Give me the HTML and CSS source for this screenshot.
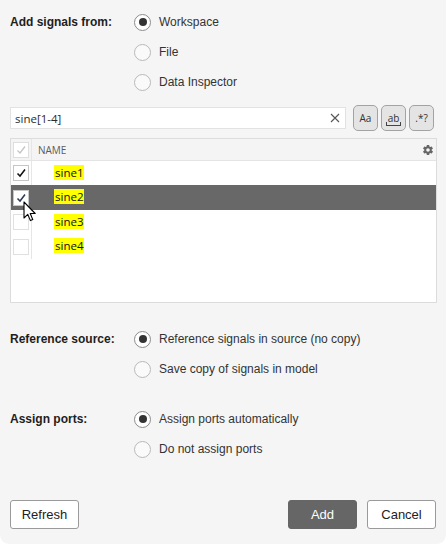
FILE: index.html
```html
<!DOCTYPE html>
<html lang="en">
<head>
<meta charset="utf-8">
<title>Add signals</title>
<link rel="stylesheet" href="styles.css">
</head>
<body>
<div class="dialog">
  <div class="field">
    <div class="field-label">Add signals from:</div>
    <div class="radio-group">
      <div class="radio checked"><span class="radio-circle"></span><span>Workspace</span></div>
      <div class="radio"><span class="radio-circle"></span><span>File</span></div>
      <div class="radio"><span class="radio-circle"></span><span>Data Inspector</span></div>
    </div>
  </div>

  <div class="search-row">
    <div class="search-box">
      <span class="search-text">sine[1-4]</span>
      <svg class="clear-icon" width="10" height="10" viewBox="0 0 10 10"><path d="M1 1 L9 9 M9 1 L1 9" stroke="#555" stroke-width="1.1" fill="none"/></svg>
    </div>
    <div class="toggle-buttons">
      <div class="toggle">Aa</div>
      <div class="toggle"><span class="word">ab</span></div>
      <div class="toggle">.*?</div>
    </div>
  </div>

  <div class="table">
    <div class="thead">
      <div class="cell-check"><span class="checkbox disabled"><svg width="12" height="12" viewBox="0 0 12 12"><path d="M2.5 6.5 L5 9 L10 2.5" stroke="#c4c4c4" stroke-width="1.3" fill="none"/></svg></span></div>
      <div class="cell-name head-name">NAME</div>
      <svg class="gear" width="12" height="12" viewBox="0 0 24 24"><path fill="#666" d="M19.4 13c.04-.33.06-.66.06-1s-.02-.67-.06-1l2.1-1.650c.2-.15.25-.42.12-.64l-2-3.46c-.12-.22-.39-.3-.61-.22l-2.49 1c-.52-.4-1.080-.73-1.690-.98l-.38-2.65A.49.49 0 0 0 14 2h-4c-.25 0-.46.18-.49.42l-.38 2.65c-.61.25-1.17.59-1.69.98l-2.49-1c-.23-.09-.49 0-.61.22l-2 3.46c-.13.22-.07.49.12.64L4.57 11c-.04.33-.07.67-.07 1s.03.67.07 1l-2.11 1.65c-.19.15-.24.42-.12.64l2 3.46c.12.22.39.3.61.22l2.49-1c.52.4 1.08.73 1.69.98l.38 2.65c.03.24.24.42.49.42h4c.25 0 .46-.18.49-.42l.38-2.65c.61-.25 1.17-.59 1.69-.98l2.49 1c.23.09.49 0 .61-.22l2-3.46c.12-.22.07-.49-.12-.64L19.4 13zM12 15.5c-1.93 0-3.5-1.57-3.5-3.5s1.57-3.5 3.5-3.5 3.5 1.57 3.5 3.5-1.57 3.5-3.5 3.5z"/></svg>
    </div>
    <div class="tbody">
      <div class="row">
        <div class="cell-check"><span class="checkbox"><svg width="12" height="12" viewBox="0 0 12 12"><path d="M2.5 6.5 L5 9 L10 2.5" stroke="#111" stroke-width="1.5" fill="none"/></svg></span></div>
        <div class="cell-name"><span class="hl">sine1</span></div>
      </div>
      <div class="row selected">
        <div class="cell-check"><span class="checkbox"><svg width="12" height="12" viewBox="0 0 12 12"><path d="M2.5 6.5 L5 9 L10 2.5" stroke="#2c3a55" stroke-width="1.5" fill="none"/></svg></span></div>
        <div class="cell-name"><span class="hl">sine2</span></div>
      </div>
      <div class="row">
        <div class="cell-check"><span class="checkbox empty"></span></div>
        <div class="cell-name"><span class="hl">sine3</span></div>
      </div>
      <div class="row">
        <div class="cell-check"><span class="checkbox empty"></span></div>
        <div class="cell-name"><span class="hl">sine4</span></div>
      </div>
    </div>
    <svg class="cursor" width="14" height="22" viewBox="0 0 14 22"><path d="M1 1 L1 17 L4.8 13.4 L7.4 19.6 L9.8 18.6 L7.2 12.5 L12.2 12.5 Z" fill="#fff" stroke="#000" stroke-width="1.1" stroke-linejoin="round"/></svg>
  </div>

  <div class="field field-ref">
    <div class="field-label">Reference source:</div>
    <div class="radio-group">
      <div class="radio checked"><span class="radio-circle"></span><span>Reference signals in source (no copy)</span></div>
      <div class="radio"><span class="radio-circle"></span><span>Save copy of signals in model</span></div>
    </div>
  </div>

  <div class="field field-ports">
    <div class="field-label">Assign ports:</div>
    <div class="radio-group">
      <div class="radio checked"><span class="radio-circle"></span><span>Assign ports automatically</span></div>
      <div class="radio"><span class="radio-circle"></span><span>Do not assign ports</span></div>
    </div>
  </div>

  <div class="footer">
    <button class="btn">Refresh</button>
    <div class="footer-right">
      <button class="btn primary">Add</button>
      <button class="btn">Cancel</button>
    </div>
  </div>
</div>
</body>
</html>
```
FILE: styles.css
```css
html {
  background: #ffffff;
}
body {
  margin: 0;
  width: 446px;
  height: 544px;
  background: #f5f5f5;
  border-radius: 0 0 9px 9px;
  font-family: "Liberation Sans", Arial, sans-serif;
  font-size: 12px;
  color: #2a2a2a;
  overflow: hidden;
}
.dialog {
  padding: 7px 9px 0 10px;
  display: flex;
  flex-direction: column;
}
.field {
  display: flex;
}
.field-label {
  flex: 0 0 124px;
  font-weight: bold;
  line-height: 30px;
  color: #1e1e1e;
}
.radio-group {
  display: flex;
  flex-direction: column;
}
.radio {
  height: 30px;
  display: flex;
  align-items: center;
  gap: 8px;
  color: #333;
}
.radio-circle {
  width: 17px;
  height: 17px;
  box-sizing: border-box;
  border: 1px solid #b9b9b9;
  border-radius: 50%;
  background: #fafafa;
  display: flex;
  align-items: center;
  justify-content: center;
}
.radio.checked .radio-circle {
  border: 1.5px solid #8c8c8c;
  background: #ffffff;
}
.radio.checked .radio-circle::after {
  content: "";
  width: 8px;
  height: 8px;
  border-radius: 50%;
  background: #333;
}

.search-row {
  margin-top: 8px;
  height: 26px;
  display: flex;
  align-items: center;
}
.search-box {
  width: 336px;
  height: 22px;
  box-sizing: border-box;
  background: #fff;
  border: 1px solid #e2e2e2;
  display: flex;
  align-items: center;
  justify-content: space-between;
  padding: 0 5px 0 4px;
}
.search-text {
  font-family: "Open Sans", "Noto Sans", sans-serif;
  font-size: 11.5px;
  color: #2b2b2b;
}
.toggle-buttons {
  margin-left: 7px;
  display: flex;
  gap: 3px;
}
.toggle {
  width: 25px;
  height: 26px;
  box-sizing: border-box;
  border: 1px solid #a3a3a3;
  border-radius: 5px;
  background: #e4e4e4;
  display: flex;
  align-items: center;
  justify-content: center;
  font-family: "Open Sans", "Noto Sans", sans-serif;
  font-size: 10px;
  color: #333;
}
.word {
  position: relative;
  padding: 0 2px;
  line-height: 11px;
}
.word::after {
  content: "";
  position: absolute;
  left: 0;
  right: 0;
  bottom: -2px;
  height: 3px;
  border: 1px solid #444;
  border-top: none;
}

.table {
  position: relative;
  margin-top: 7px;
  width: 427px;
  height: 165px;
  box-sizing: border-box;
  background: #fff;
  border: 1px solid #dcdcdc;
  font-family: "Open Sans", "Noto Sans", sans-serif;
}
.thead {
  height: 21px;
  background: #f4f4f4;
  border-bottom: 1px solid #e4e4e4;
  display: flex;
  align-items: center;
}
.thead .cell-check {
  height: 21px;
}
.cell-check {
  flex: 0 0 21px;
  box-sizing: border-box;
  border-right: 1px solid #e6e6e6;
  display: flex;
  align-items: center;
  padding-left: 2px;
  height: 100%;
}
.checkbox {
  width: 16px;
  height: 16px;
  box-sizing: border-box;
  border: 1px solid #c6c6c6;
  background: #fff;
  display: flex;
  align-items: center;
  justify-content: center;
}
.checkbox.disabled {
  border-color: #dedede;
}
.checkbox.empty {
  border-color: #e0e0e0;
}
.cell-name {
  flex: 1;
  padding-left: 22px;
  padding-bottom: 2px;
  font-size: 11.5px;
  color: #111;
}
.head-name {
  padding-left: 6px;
  padding-bottom: 0;
  font-size: 10px;
  color: #5c5c5c;
}
.gear {
  margin-right: 2px;
}
.row {
  height: 24px;
  display: flex;
  align-items: center;
}
.row:nth-child(2n) {
  height: 25px;
}
.row.selected {
  background: #686868;
}
.row.selected .cell-check {
  border-right-color: #686868;
}
.hl {
  background: #ffff00;
  padding: 0 1px;
}
.cursor {
  position: absolute;
  left: 12px;
  top: 62px;
}

.field-ref {
  margin-top: 21px;
}
.field-ports {
  margin-top: 20px;
}

.footer {
  margin-top: 36px;
  display: flex;
  justify-content: space-between;
  padding-right: 1px;
}
.footer-right {
  display: flex;
  gap: 10px;
}
.btn {
  width: 69px;
  height: 29px;
  box-sizing: border-box;
  border: 1px solid #9a9a9a;
  border-radius: 3px;
  background: #fff;
  font-family: "Liberation Sans", Arial, sans-serif;
  font-size: 13px;
  color: #222;
  padding: 0;
}
.btn.primary {
  background: #666;
  border-color: #666;
  color: #fff;
}
```
